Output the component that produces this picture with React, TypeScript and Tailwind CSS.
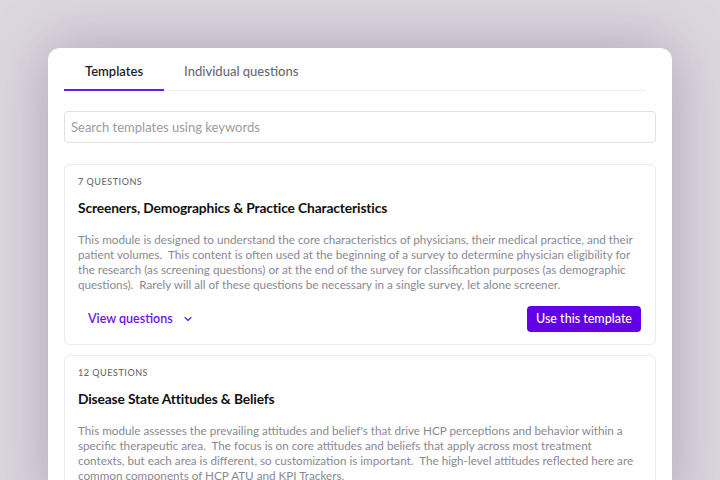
import { ChevronDown } from "lucide-react";

const templates = [
  {
    count: "7 QUESTIONS",
    title: "Screeners, Demographics & Practice Characteristics",
    body: "This module is designed to understand the core characteristics of physicians, their medical practice, and their patient volumes.  This content is often used at the beginning of a survey to determine physician eligibility for the research (as screening questions) or at the end of the survey for classification purposes (as demographic questions).  Rarely will all of these questions be necessary in a single survey, let alone screener.",
  },
  {
    count: "12 QUESTIONS",
    title: "Disease State Attitudes & Beliefs",
    body: "This module assesses the prevailing attitudes and belief's that drive HCP perceptions and behavior within a specific therapeutic area.  The focus is on core attitudes and beliefs that apply across most treatment contexts, but each area is different, so customization is important.  The high-level attitudes reflected here are common components of HCP ATU and KPI Trackers.",
  },
];

function TemplateCard({ count, title, body }: { count: string; title: string; body: string }) {
  return (
    <div className="border border-[#ececef] rounded-md pt-[11px] pb-[12px] pl-[13px] pr-[14px]">
      <div className="text-[9px] leading-[12px] tracking-[0.06em] text-[#6c6a75] font-medium">{count}</div>
      <h2 className="mt-[10px] text-[13.8px] leading-5 font-bold text-[#111015] tracking-[-0.01em]">{title}</h2>
      <p className="mt-[14px] text-[11.7px] leading-[15px] text-[#8b8893] whitespace-pre-wrap">{body}</p>
      <div className="mt-[14px] flex items-center justify-between">
        <button className="flex items-center gap-[9px] pl-[10px] text-[12.5px] font-semibold text-[#6b12f0]">
          View questions
          <ChevronDown size={12} strokeWidth={2.25} />
        </button>
        <button className="h-[26px] px-[9px] rounded-[4px] bg-[#6200ea] text-white text-[12.5px] font-medium">
          Use this template
        </button>
      </div>
    </div>
  );
}

export default function App() {
  return (
    <div
      className="w-[720px] h-[480px] overflow-hidden bg-[#dcd7e0] pt-[48px] px-[48px]"
      style={{ fontFamily: "Lato, 'Liberation Sans', sans-serif" }}
    >
      <div className="bg-white rounded-t-[12px] h-[460px] px-[16px] pt-[13px] shadow-[0_0_60px_rgba(90,60,110,0.35)]">
        <div className="flex border-b border-[#eeeef0] mr-[10px]">
          <button className="-mb-px px-[21px] pb-[8px] leading-5 text-[13px] font-semibold text-[#1f1d2b] border-b-2 border-[#6d16f0]">
            Templates
          </button>
          <button className="-mb-px px-[20px] pb-[8px] leading-5 text-[13px] font-medium text-[#6b6a75] border-b-2 border-transparent">
            Individual questions
          </button>
        </div>
        <input
          className="mt-[20px] w-full h-[32px] rounded-[4px] border border-[#e1e0e4] px-[6px] text-[13px] outline-none placeholder:text-[#9c9aa4]"
          placeholder="Search templates using keywords"
        />
        <div className="mt-[21px] flex flex-col gap-[10px]">
          {templates.map((t) => (
            <TemplateCard key={t.count} {...t} />
          ))}
        </div>
      </div>
    </div>
  );
}
